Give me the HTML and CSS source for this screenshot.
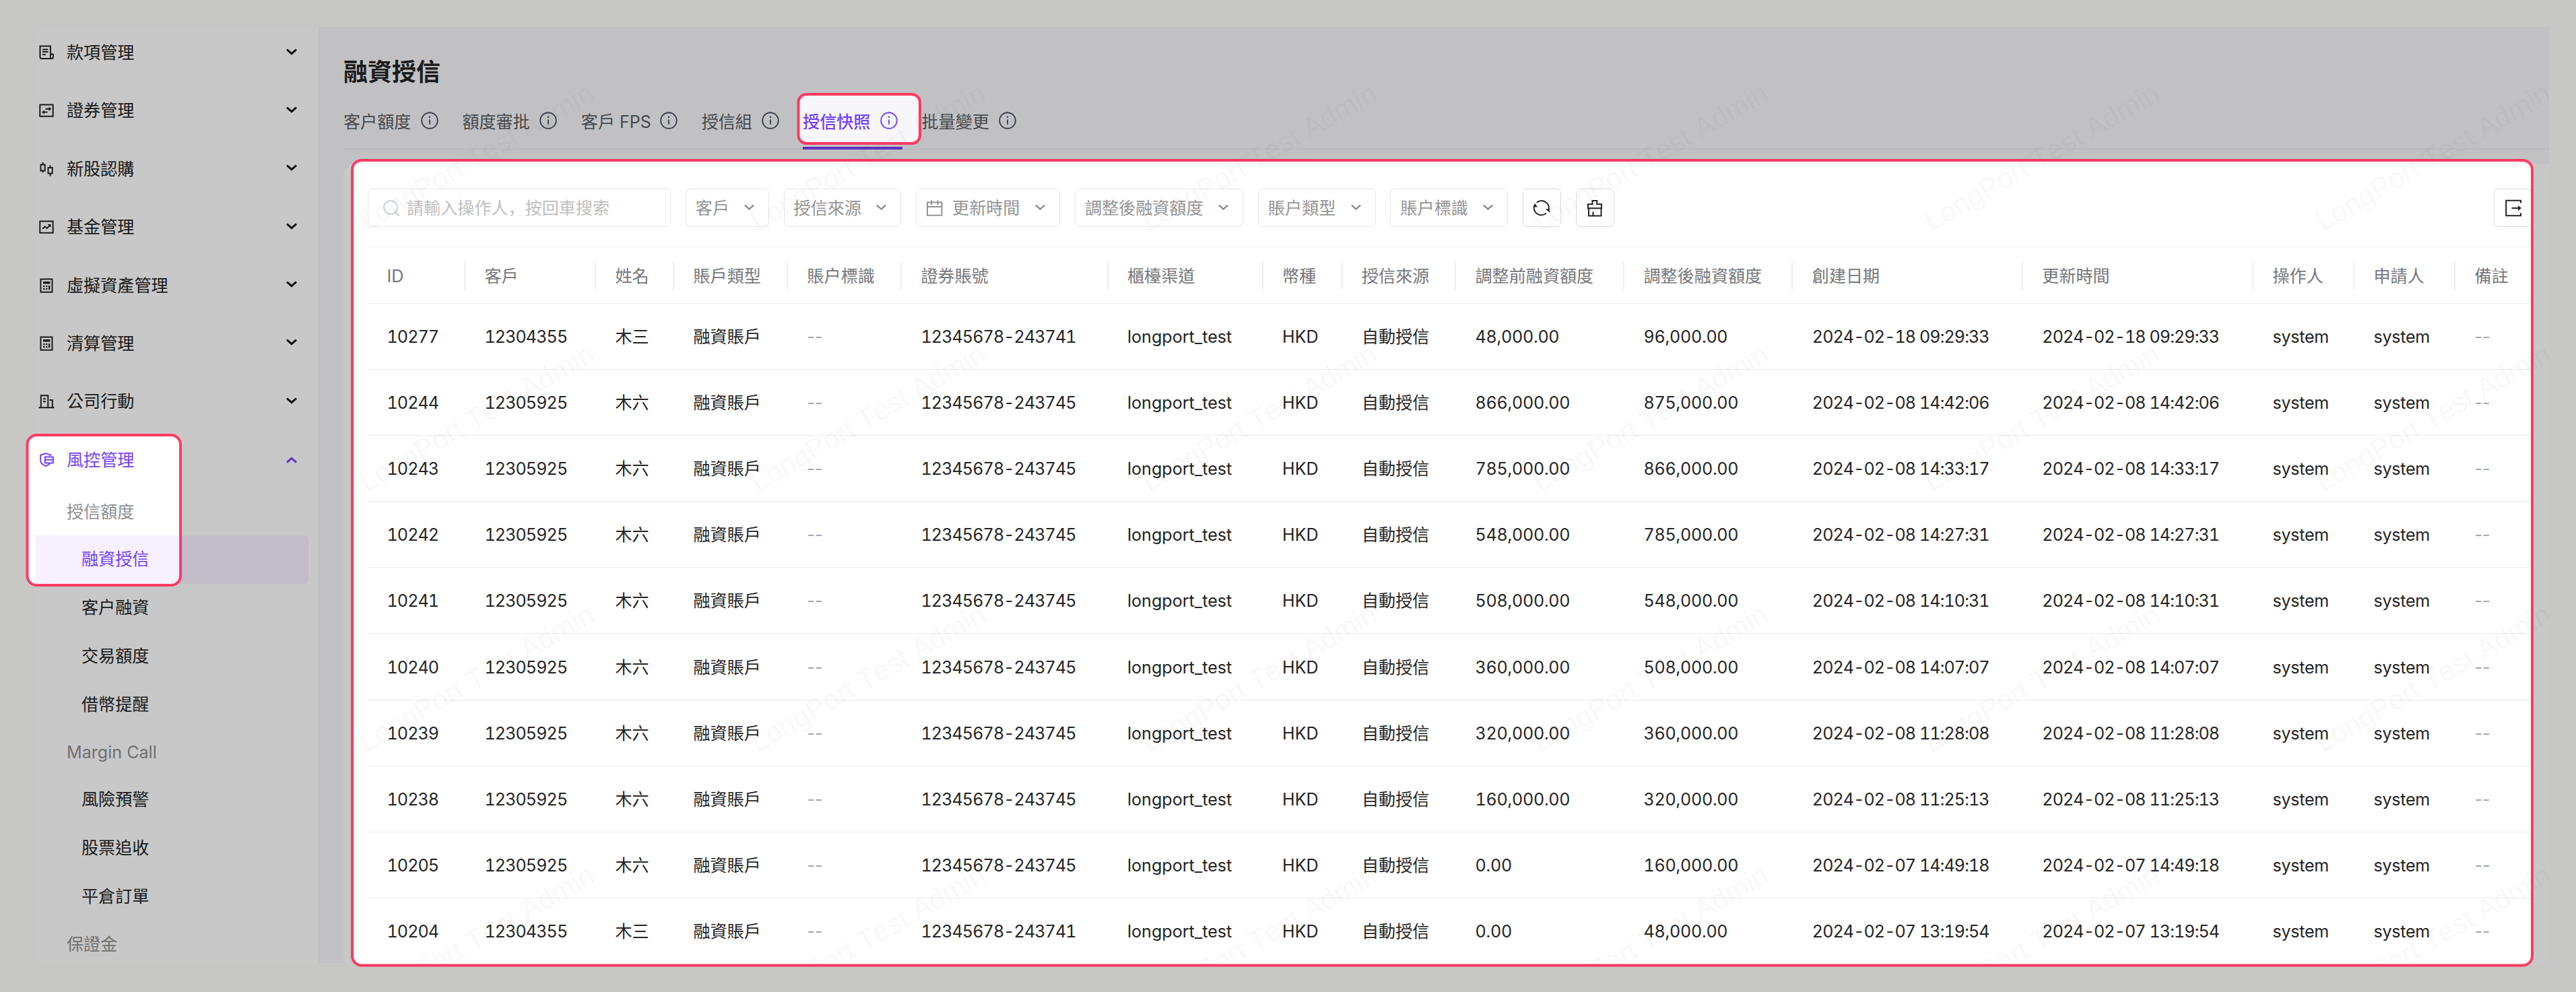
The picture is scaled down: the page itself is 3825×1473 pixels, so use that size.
FILE: index.html
```html
<!DOCTYPE html>
<html lang="zh-Hant">
<head>
<meta charset="utf-8">
<title>融資授信</title>
<link rel="stylesheet" href="styles.css">
</head>
<body>
<svg class="sprite" aria-hidden="true">
  <symbol id="receipt" viewBox="0 0 24 24"><path d="M2.5 19V2.5h15.5V20.600M2.500 19c0 1.200.8 2 2 2h15c1.500 0 2.500-1 2.500-2.300V14.500h-4M6 7.500h8.500M6 11h8.500M6 15h5"/></symbol>
  <symbol id="swap" viewBox="0 0 24 24"><path d="M2.300 3.500h19.400v17.200H2.300zM10.500 9.800h7M6.500 14.500h7"/><path class="solid" d="M15.500 6.800l4 3-4 3zM9 11.500l-4 3 4 3z"/></symbol>
  <symbol id="candles" viewBox="0 0 24 24"><path d="M3.500 5.500h6.200v9H3.500zM6.600 2v3.500M6.600 14.500v2.800M14.500 10h6.200v8.500h-6.200zM17.600 6.500V10M17.600 18.500v4"/></symbol>
  <symbol id="trend" viewBox="0 0 24 24"><path d="M2.300 3.500h19.400v17.200H2.300zM6.200 15l3.600-3.600 3 2.500 4-4"/><path class="solid" d="M13.500 8h5v5z"/></symbol>
  <symbol id="calc" viewBox="0 0 24 24"><path d="M3.500 2.500h17v19.300h-17z"/><path class="solid" d="M7 6h10.500v3.600H7zM7 12h2.500v2.300H7zM11 12h2.500v2.300H11zM7 16h2.500v2.300H7zM11 16h2.500v2.300H11zM15 12h2.300v6.300H15z"/></symbol>
  <symbol id="building" viewBox="0 0 24 24"><path d="M.5 21.300h23M3.800 21V3.300h10.500V21M16.500 10h4.300v11M7 8.200h4M7 12.200h4"/></symbol>
  <symbol id="shield" viewBox="0 0 24 24"><path d="M18.500 6V4.800L11 2.300 3.200 4.800v8.400c0 3.400 2.700 5.600 7.800 8 2.600-1.200 4.600-2.500 5.900-3.900M9.800 7.500h12v9h-12zM9.800 11.700h12" /></symbol>
  <symbol id="down" viewBox="0 0 18 12"><path d="M2 2.500L9 8.700l7-6.200"/></symbol>
  <symbol id="up" viewBox="0 0 18 12"><path d="M2 8.700L9 2.500l7 6.200"/></symbol>
  <symbol id="info" viewBox="0 0 26 26"><circle cx="13" cy="13" r="11.800"/><path d="M13 11.500v7.300"/><circle class="solid" cx="13" cy="7.700" r="1.300"/></symbol>
  <symbol id="search" viewBox="0 0 26 26"><circle cx="12" cy="12" r="10"/><path d="M18.500 18.500l6 6"/></symbol>
  <symbol id="calendar" viewBox="0 0 26 26"><path d="M2 4.500h21.500v19.300H2zM2 11h21.500M8 1.500V8M17.500 1.500V8"/></symbol>
  <symbol id="refresh" viewBox="0 0 26 26"><path d="M5.800 4.700A11 11 0 0 1 23.500 16M20 20.600A11 11 0 0 1 2.200 9"/><path class="solid" d="M19 14.200h6v5.600zM7 11.500H1l2-5.800z"/></symbol>
  <symbol id="brush" viewBox="0 0 26 26"><path d="M3 14V7.200h6.500V2h6.800v5.200H23V14M2 13.200h22M4 14v10.500h18.500V14M10.500 18.500V24"/></symbol>
  <symbol id="export" viewBox="0 0 26 26"><path d="M24 5.500V1.800H2.200v22.500H24v-4M10.500 13h10"/><path class="solid" d="M20 9l5 4-5 4z"/></symbol>
</svg>

<div class="app">
  <nav class="sidebar">
    <div class="item"><svg class="icon"><use href="#receipt"/></svg><span>款項管理</span><svg class="arrow"><use href="#down"/></svg></div>
    <div class="item"><svg class="icon"><use href="#swap"/></svg><span>證券管理</span><svg class="arrow"><use href="#down"/></svg></div>
    <div class="item"><svg class="icon"><use href="#candles"/></svg><span>新股認購</span><svg class="arrow"><use href="#down"/></svg></div>
    <div class="item"><svg class="icon"><use href="#trend"/></svg><span>基金管理</span><svg class="arrow"><use href="#down"/></svg></div>
    <div class="item"><svg class="icon"><use href="#calc"/></svg><span>虛擬資產管理</span><svg class="arrow"><use href="#down"/></svg></div>
    <div class="item"><svg class="icon"><use href="#calc"/></svg><span>清算管理</span><svg class="arrow"><use href="#down"/></svg></div>
    <div class="item"><svg class="icon"><use href="#building"/></svg><span>公司行動</span><svg class="arrow"><use href="#down"/></svg></div>
    <div class="item open"><svg class="icon"><use href="#shield"/></svg><span>風控管理</span><svg class="arrow"><use href="#up"/></svg></div>
    <div class="group">授信額度</div>
    <div class="sub current">融資授信</div>
    <div class="sub">客户融資</div>
    <div class="sub">交易額度</div>
    <div class="sub">借幣提醒</div>
    <div class="group">Margin Call</div>
    <div class="sub">風險預警</div>
    <div class="sub">股票追收</div>
    <div class="sub">平倉訂單</div>
    <div class="group">保證金</div>
  </nav>

  <main class="main">
    <h1 class="title">融資授信</h1>
    <div class="tabs">
      <div class="tab">客户額度<svg><use href="#info"/></svg></div>
      <div class="tab">額度審批<svg><use href="#info"/></svg></div>
      <div class="tab">客戶 FPS<svg><use href="#info"/></svg></div>
      <div class="tab">授信組<svg><use href="#info"/></svg></div>
      <div class="tab active">授信快照<svg><use href="#info"/></svg></div>
      <div class="tab">批量變更<svg><use href="#info"/></svg></div>
    </div>
    <section class="card">
      <div class="filters">
        <div class="search" lang="zh-Hans"><svg><use href="#search"/></svg>請輸入操作人，按回車搜索</div>
        <div class="select w-xs">客戶<svg class="caret"><use href="#down"/></svg></div>
        <div class="select w-sm">授信來源<svg class="caret"><use href="#down"/></svg></div>
        <div class="select w-md"><svg class="cal"><use href="#calendar"/></svg>更新時間<svg class="caret"><use href="#down"/></svg></div>
        <div class="select w-lg">調整後融資額度<svg class="caret"><use href="#down"/></svg></div>
        <div class="select w-sm">賬户類型<svg class="caret"><use href="#down"/></svg></div>
        <div class="select w-sm">賬户標識<svg class="caret"><use href="#down"/></svg></div>
        <div class="button"><svg><use href="#refresh"/></svg></div>
        <div class="button"><svg><use href="#brush"/></svg></div>
        <div class="button last"><svg><use href="#export"/></svg></div>
      </div>
      <div class="table">
        <div class="row head"><b>ID</b><b>客戶</b><b>姓名</b><b>賬戶類型</b><b>賬户標識</b><b>證券賬號</b><b>櫃檯渠道</b><b>幣種</b><b>授信來源</b><b>調整前融資額度</b><b>調整後融資額度</b><b>創建日期</b><b>更新時間</b><b>操作人</b><b>申請人</b><b>備註</b></div>
        <div class="row"><span>10277</span><span>12304355</span><span>木三</span><span>融資賬戶</span><i>--</i><span>12345678-243741</span><span>longport_test</span><span>HKD</span><span>自動授信</span><span>48,000.00</span><span>96,000.00</span><span>2024-02-18 09:29:33</span><span>2024-02-18 09:29:33</span><span>system</span><span>system</span><i>--</i></div>
        <div class="row"><span>10244</span><span>12305925</span><span>木六</span><span>融資賬戶</span><i>--</i><span>12345678-243745</span><span>longport_test</span><span>HKD</span><span>自動授信</span><span>866,000.00</span><span>875,000.00</span><span>2024-02-08 14:42:06</span><span>2024-02-08 14:42:06</span><span>system</span><span>system</span><i>--</i></div>
        <div class="row"><span>10243</span><span>12305925</span><span>木六</span><span>融資賬戶</span><i>--</i><span>12345678-243745</span><span>longport_test</span><span>HKD</span><span>自動授信</span><span>785,000.00</span><span>866,000.00</span><span>2024-02-08 14:33:17</span><span>2024-02-08 14:33:17</span><span>system</span><span>system</span><i>--</i></div>
        <div class="row"><span>10242</span><span>12305925</span><span>木六</span><span>融資賬戶</span><i>--</i><span>12345678-243745</span><span>longport_test</span><span>HKD</span><span>自動授信</span><span>548,000.00</span><span>785,000.00</span><span>2024-02-08 14:27:31</span><span>2024-02-08 14:27:31</span><span>system</span><span>system</span><i>--</i></div>
        <div class="row"><span>10241</span><span>12305925</span><span>木六</span><span>融資賬戶</span><i>--</i><span>12345678-243745</span><span>longport_test</span><span>HKD</span><span>自動授信</span><span>508,000.00</span><span>548,000.00</span><span>2024-02-08 14:10:31</span><span>2024-02-08 14:10:31</span><span>system</span><span>system</span><i>--</i></div>
        <div class="row"><span>10240</span><span>12305925</span><span>木六</span><span>融資賬戶</span><i>--</i><span>12345678-243745</span><span>longport_test</span><span>HKD</span><span>自動授信</span><span>360,000.00</span><span>508,000.00</span><span>2024-02-08 14:07:07</span><span>2024-02-08 14:07:07</span><span>system</span><span>system</span><i>--</i></div>
        <div class="row"><span>10239</span><span>12305925</span><span>木六</span><span>融資賬戶</span><i>--</i><span>12345678-243745</span><span>longport_test</span><span>HKD</span><span>自動授信</span><span>320,000.00</span><span>360,000.00</span><span>2024-02-08 11:28:08</span><span>2024-02-08 11:28:08</span><span>system</span><span>system</span><i>--</i></div>
        <div class="row"><span>10238</span><span>12305925</span><span>木六</span><span>融資賬戶</span><i>--</i><span>12345678-243745</span><span>longport_test</span><span>HKD</span><span>自動授信</span><span>160,000.00</span><span>320,000.00</span><span>2024-02-08 11:25:13</span><span>2024-02-08 11:25:13</span><span>system</span><span>system</span><i>--</i></div>
        <div class="row"><span>10205</span><span>12305925</span><span>木六</span><span>融資賬戶</span><i>--</i><span>12345678-243745</span><span>longport_test</span><span>HKD</span><span>自動授信</span><span>0.00</span><span>160,000.00</span><span>2024-02-07 14:49:18</span><span>2024-02-07 14:49:18</span><span>system</span><span>system</span><i>--</i></div>
        <div class="row"><span>10204</span><span>12304355</span><span>木三</span><span>融資賬戶</span><i>--</i><span>12345678-243741</span><span>longport_test</span><span>HKD</span><span>自動授信</span><span>0.00</span><span>48,000.00</span><span>2024-02-07 13:19:54</span><span>2024-02-07 13:19:54</span><span>system</span><span>system</span><i>--</i></div>
      </div>
    </section>
  </main>
</div>

<!-- Watermark, dimming layer with three openings, and their outlines -->
<svg class="overlay" viewBox="0 0 3825 1473">
  <defs>
    <pattern id="mark" x="500" y="0" width="581" height="387" patternUnits="userSpaceOnUse">
      <text class="mark" transform="translate(44 344) rotate(-30)">LongPort Test Admin</text>
    </pattern>
    <mask id="holes">
      <rect width="3825" height="1473" fill="#fff"/>
      <rect x="40.500" y="646" width="227.500" height="223" rx="14" fill="#000"/>
      <rect x="1185.500" y="140" width="180.500" height="73" rx="12" fill="#000"/>
      <rect x="523" y="238" width="3237" height="1195.500" rx="14" fill="#000"/>
    </mask>
  </defs>
  <rect x="500" y="0" width="3285" height="1430" fill="url(#mark)"/>
  <rect class="dim" width="3825" height="1473" mask="url(#holes)"/>
  <g class="frames">
    <rect x="40.500" y="646" width="227.500" height="223" rx="14"/>
    <rect x="1185.500" y="140" width="180.500" height="73" rx="12"/>
    <rect x="523" y="238" width="3237" height="1195.500" rx="14"/>
  </g>
</svg>
</body>
</html>
```
FILE: styles.css
```css
* { box-sizing: border-box; }

body {
  margin: 0;
  width: 3825px;
  height: 1473px;
  overflow: hidden;
  background: #fefefc;
  color: #242424;
  font-family: Inter, "Noto Sans CJK TC", sans-serif;
  font-size: 25.1px;
  line-height: 36px;
}

svg {
  display: block;
  flex: none;
  fill: none;
  stroke: currentColor;
  stroke-width: 2;
}

.solid { fill: currentColor; stroke: none; }
.sprite { position: absolute; width: 0; height: 0; }

.app {
  display: flex;
  width: 3732px;
  height: 1390px;
  margin: 40px 0 0 53px;
}

/* Sidebar */
.sidebar {
  flex: none;
  width: 421px;
  height: 1390px;
  border-right: 1px solid #eeeef0;
  background: #fff;
}

.item {
  display: flex;
  align-items: center;
  height: 86.4px;
  padding: 0 31px 0 4px;
}

.item:first-child { margin-top: -5.2px; }
.item span { flex: 1; margin-left: 18px; }
.item .icon { width: 24px; height: 24px; }
.item .arrow { width: 18px; height: 12px; margin-top: -3px; stroke: #111; stroke-width: 3; }
.item.open { color: #7341f5; }
.item.open .arrow { margin-top: 2px; stroke: #7341f5; }

.group {
  height: 69px;
  padding-left: 46px;
  line-height: 68px;
  color: #8f8f8f;
}

.sub {
  width: 405px;
  height: 72px;
  padding-left: 68px;
  line-height: 71px;
}

.sub.current {
  border-radius: 0 6px 6px 0;
  background: #f6f0ff;
  color: #7341f5;
}

/* Page */
.main {
  flex: 1;
  min-width: 0;
  padding: 45px 0 0 36px;
  overflow: hidden;
  background: #f7f6fa;
}

.title {
  margin: 0;
  font-size: 36px;
  font-weight: 600;
  line-height: 44px;
}

.tabs {
  display: grid;
  grid-template-columns: 148px 148px 150.500px 122px 148px 148px;
  column-gap: 28.400px;
  height: 93px;
  border-bottom: 1px solid #e7e6ea;
}

.tab {
  display: flex;
  justify-content: space-between;
  align-items: center;
  height: 93px;
  padding: 11px 7px 0 0;
  color: #595d62;
  white-space: nowrap;
}

.tab svg { width: 26px; height: 26px; margin-top: -4px; color: #495465; stroke-width: 1.900; }
.tab.active { border-bottom: 4px solid #7341f5; padding-top: 15px; color: #7341f5; font-weight: 500; }
.tab.active svg { color: #7341f5; }

.card {
  height: 1200px;
  margin-top: 22px;
  padding: 36px 25px 0 36px;
  border-radius: 16px 0 0 0;
  background: #fff;
}

.filters { display: flex; gap: 21.800px; }

.search, .select, .button {
  display: flex;
  align-items: center;
  flex: none;
  height: 57px;
  border: 1px solid #e5e6eb;
  border-radius: 7px;
  white-space: nowrap;
}

.search { width: 450px; padding-left: 21px; gap: 10px; color: #bfbfbf; font-family: Inter, "Noto Sans CJK SC", sans-serif; }
.search svg { width: 26px; height: 26px; stroke: #cdd1db; }
.select { padding: 0 20px 0 14px; color: #949494; }
.caret { width: 17px; height: 12px; margin: 0 0 1px auto; stroke: #85878c; stroke-width: 2.400; }
.cal { width: 26px; height: 26px; margin-right: 13px; }
.w-xs { width: 124px; }
.w-sm { width: 174.700px; }
.w-md { width: 214px; }
.w-lg { width: 250.300px; }
.button { width: 57px; justify-content: center; border-color: #d9d9d9; }
.button svg { width: 26px; height: 26px; }
.button.last { margin-left: auto; }

/* Records */
.table { margin-top: 29px; border-top: 1px solid #f3f3f4; }

.row {
  display: grid;
  grid-template-columns: 145px 194px 116px 169px 169px 306.500px 230px 118px 168.500px 250px 250.300px 341.500px 342.200px 150px 150px 1fr;
  align-items: center;
  height: 98.100px;
  padding-top: 1px;
  border-bottom: 1px solid #ededee;
  white-space: nowrap;
}

.row > * { padding-left: 28.500px; }
.row i { color: #a0a6b8; font-style: normal; }
.row span { font-variant-numeric: tabular-nums; }

/* Identifiers and timestamps are set slightly tighter */
.row span:nth-child(1),
.row span:nth-child(2),
.row span:nth-child(6),
.row span:nth-child(12),
.row span:nth-child(13) { letter-spacing: -.930px; }
.row span:nth-child(10),
.row span:nth-child(11),
.row span:nth-child(14),
.row span:nth-child(15) { letter-spacing: -.280px; }

.row.head { height: 84px; color: #76777a; }
.row b { height: 41px; border-right: 2px solid #ededee; line-height: 42px; font-weight: 400; }
.row b:last-child { border-right: 0; }

/* Layers above the page */
.overlay {
  position: absolute;
  top: 0;
  left: 0;
  width: 3825px;
  height: 1473px;
  stroke: none;
}

.mark {
  fill: #000;
  fill-opacity: .027;
  font-family: "Liberation Sans", sans-serif;
  font-size: 42px;
  font-kerning: none;
}

.dim { fill: #000; fill-opacity: .216; }
.frames { stroke: #ff3b62; stroke-width: 4; }
```
